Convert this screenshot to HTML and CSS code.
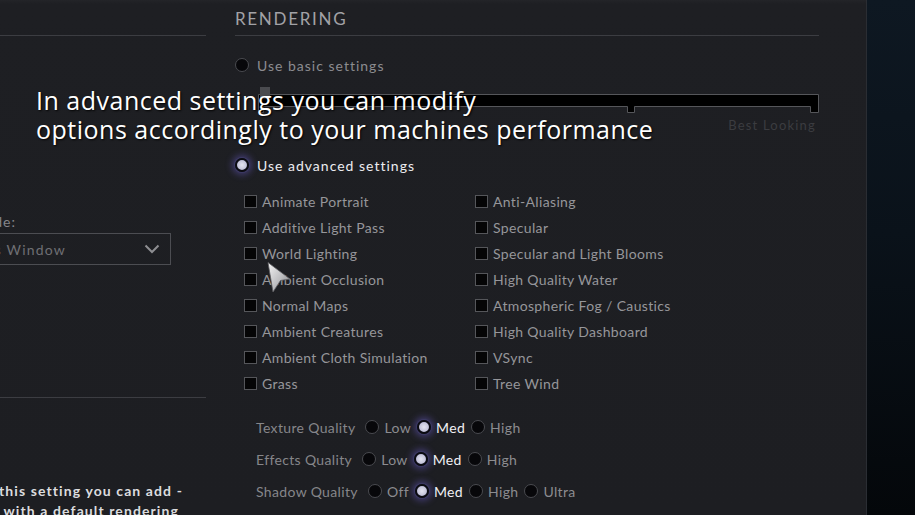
FILE: index.html
```html
<!DOCTYPE html>
<html lang="en">
<head>
<meta charset="utf-8">
<title>Video Settings</title>
<link rel="stylesheet" href="styles.css">
</head>
<body>
<div class="screen">
  <aside class="side">
    <div class="side-rule"></div>
    <div class="field">
      <div class="field-label">Display Mode:</div>
      <div class="select">
        <span class="select-value">Borderless Window</span>
        <svg class="chevron" width="16" height="10" viewBox="0 0 16 10"><path d="M1.5 1.5 L8 8 L14.5 1.5" fill="none" stroke="#8e8e92" stroke-width="2"/></svg>
      </div>
    </div>
    <div class="side-rule lower"></div>
    <p class="side-note"><span>Using this setting you can add -</span><span>launch options, with a default rendering</span></p>
  </aside>

  <main class="render">
    <h2 class="render-title">RENDERING</h2>

    <div class="option basic"><span class="radio"></span>Use basic settings</div>

    <svg class="slider" width="584" height="28" viewBox="0 0 584 28">
      <path d="M23.5 8.5 H583.5 V26.5 H575.5 V20.5 H399.5 V26.5 H392.5 V20.5 H28.5 V26.5 H23.5 Z" fill="#000" stroke="#55565a" stroke-width="1"/>
      <rect x="25" y="1" width="10" height="12" fill="#4a4b4f"/>
    </svg>
    <div class="slider-labels"><span>Best Looking</span></div>

    <div class="option advanced"><span class="radio on"></span>Use advanced settings</div>

    <div class="checks">
      <label class="check"><span class="box"></span>Animate Portrait</label>
      <label class="check"><span class="box"></span>Anti-Aliasing</label>
      <label class="check"><span class="box"></span>Additive Light Pass</label>
      <label class="check"><span class="box"></span>Specular</label>
      <label class="check"><span class="box"></span>World Lighting</label>
      <label class="check"><span class="box"></span>Specular and Light Blooms</label>
      <label class="check"><span class="box"></span>Ambient Occlusion</label>
      <label class="check"><span class="box"></span>High Quality Water</label>
      <label class="check"><span class="box"></span>Normal Maps</label>
      <label class="check"><span class="box"></span>Atmospheric Fog / Caustics</label>
      <label class="check"><span class="box"></span>Ambient Creatures</label>
      <label class="check"><span class="box"></span>High Quality Dashboard</label>
      <label class="check"><span class="box"></span>Ambient Cloth Simulation</label>
      <label class="check"><span class="box"></span>VSync</label>
      <label class="check"><span class="box"></span>Grass</label>
      <label class="check"><span class="box"></span>Tree Wind</label>
    </div>

    <div class="quality">
      <div class="q-row">
        <span class="q-label">Texture Quality</span>
        <span class="q-opt"><span class="radio"></span>Low</span>
        <span class="q-opt sel"><span class="radio on"></span>Med</span>
        <span class="q-opt"><span class="radio"></span>High</span>
      </div>
      <div class="q-row">
        <span class="q-label">Effects Quality</span>
        <span class="q-opt"><span class="radio"></span>Low</span>
        <span class="q-opt sel"><span class="radio on"></span>Med</span>
        <span class="q-opt"><span class="radio"></span>High</span>
      </div>
      <div class="q-row">
        <span class="q-label">Shadow Quality</span>
        <span class="q-opt"><span class="radio"></span>Off</span>
        <span class="q-opt sel"><span class="radio on"></span>Med</span>
        <span class="q-opt"><span class="radio"></span>High</span>
        <span class="q-opt"><span class="radio"></span>Ultra</span>
      </div>
    </div>
  </main>

  <div class="gutter"></div>
  <div class="edge"></div>

  <div class="caption">In advanced settings you can modify<br>options accordingly to your machines performance</div>

  <svg class="pointer" width="28" height="34" viewBox="0 0 28 34">
    <defs>
      <linearGradient id="ptr" x1="0" y1="0" x2="1" y2="1">
        <stop offset="0" stop-color="#f4f4f4"/>
        <stop offset="0.55" stop-color="#bdbdc0"/>
        <stop offset="1" stop-color="#7a7a7e"/>
      </linearGradient>
    </defs>
    <path d="M3 1.5 L25 18 L15.5 19.5 L8 31 Z" fill="url(#ptr)" stroke="#5c5c60" stroke-width="0.8"/>
  </svg>
</div>
</body>
</html>
```
FILE: styles.css
```css
* { box-sizing: border-box; }

html, body {
  margin: 0;
  padding: 0;
  background: #1e1f23;
}

.screen {
  position: relative;
  width: 915px;
  height: 515px;
  overflow: hidden;
  display: flex;
  background: linear-gradient(180deg, #232428 0, #1e1f23 4px, #1d1e22 100%);
  font-family: Lato, "Open Sans", sans-serif;
  color: #929296;
}

/* left settings column (partly scrolled out of view) */
.side {
  width: 206px;
  flex: none;
  padding-top: 35px;
}

.side-rule {
  height: 1px;
  background: #3c3d42;
}

.side-rule.lower { margin-top: 132px; }

.field { margin-top: 176px; }

.field-label {
  margin-left: -120px;
  width: 136px;
  text-align: right;
  white-space: nowrap;
  font-size: 14px;
  letter-spacing: 1px;
  line-height: 20px;
  color: #85858a;
}

.select {
  margin-top: 1px;
  margin-left: -79px;
  width: 250px;
  height: 32px;
  border: 1px solid #4c4d52;
  display: flex;
  align-items: center;
}

.select-value {
  flex: none;
  width: 144px;
  text-align: right;
  white-space: nowrap;
  font-size: 14px;
  letter-spacing: 1.2px;
  color: #6f6f74;
}

.chevron {
  margin-left: auto;
  margin-right: 10px;
}

.side-note {
  margin: 83px 0 0;
  width: 183px;
  display: flex;
  flex-direction: column;
  align-items: flex-end;
  font-size: 14px;
  line-height: 20px;
  letter-spacing: 1.1px;
  font-weight: 700;
  color: #dcdcdf;
  white-space: nowrap;
}

.side-note span:last-child { margin-right: 4px; }

/* rendering panel */
.render {
  margin-left: 29px;
  width: 584px;
  flex: none;
}

.render-title {
  margin: 0;
  padding: 9px 0 6px;
  line-height: 20px;
  font-size: 17px;
  font-weight: 400;
  letter-spacing: 1.7px;
  color: #a2a2a6;
  border-bottom: 1px solid #3c3d42;
  height: 36px;
}

.option {
  display: flex;
  align-items: center;
  gap: 8px;
  height: 20px;
  font-size: 14px;
  letter-spacing: 1px;
}

.option.basic {
  margin-top: 19px;
  color: #8c8c90;
}

.option.advanced {
  margin-top: 20px;
  color: #ececf0;
}

.radio {
  flex: none;
  width: 14px;
  height: 14px;
  border-radius: 50%;
  background: #07070a;
  border: 1px solid #4a4b50;
}

.radio.on {
  background: radial-gradient(circle, #e4e4f0 0, #c8c8dc 55%, #9a98c0 100%);
  border: 2px solid #0b0b12;
  box-shadow: 0 0 0 1px #3c3a64, 0 0 7px 3px rgba(110, 95, 210, 0.45);
}

.slider {
  display: block;
  margin-top: 11px;
}

.slider-labels {
  margin-top: 1px;
  height: 20px;
  line-height: 20px;
  text-align: right;
  padding-right: 3px;
  font-size: 13px;
  letter-spacing: 1.2px;
  color: #3b3c40;
}

.checks {
  margin-top: 16px;
  padding-left: 9px;
  display: grid;
  grid-template-columns: 231px 1fr;
  row-gap: 6px;
}

.check {
  display: flex;
  align-items: center;
  gap: 5px;
  height: 20px;
  font-size: 14px;
  letter-spacing: 0.35px;
  color: #96969a;
}

.box {
  flex: none;
  width: 13px;
  height: 13px;
  background: #050506;
  border: 1px solid #55565a;
}

.quality {
  margin-top: 23px;
  padding-left: 21px;
  display: flex;
  flex-direction: column;
  gap: 10px;
}

.q-row {
  display: flex;
  align-items: center;
  height: 22px;
  font-size: 14px;
  letter-spacing: 0.35px;
}

.q-label {
  color: #86868a;
  margin-right: 10px;
}

.q-opt {
  display: flex;
  align-items: center;
  gap: 5px;
  margin-right: 6px;
  color: #8c8c90;
}

.q-opt.sel { color: #f0f0f4; }

.gutter { flex: 1; }

/* dark backdrop at the right edge */
.edge {
  width: 49px;
  flex: none;
  border-left: 1px solid #2a2d33;
  background: linear-gradient(180deg, #0e1822 0, #0a121a 45%, #04070a 100%);
}

/* subtitle overlay */
.caption {
  position: absolute;
  left: 36px;
  top: 86px;
  font-family: "Open Sans", sans-serif;
  font-size: 25px;
  line-height: 29px;
  color: #ffffff;
  letter-spacing: 0.5px;
  text-shadow: 1px 1px 2px rgba(0, 0, 0, 0.9);
  white-space: nowrap;
}

.pointer {
  position: absolute;
  left: 265px;
  top: 261px;
}
```
